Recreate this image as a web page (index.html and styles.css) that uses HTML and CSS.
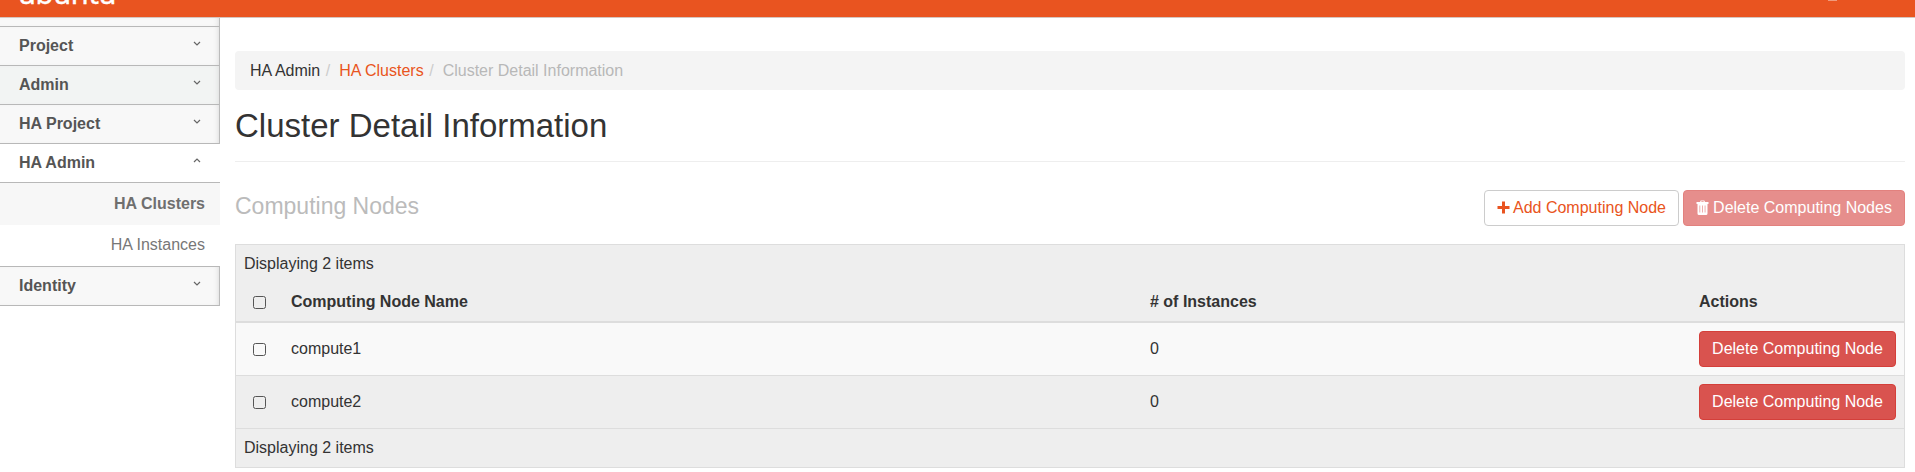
FILE: index.html
```html
<!DOCTYPE html>
<html lang="en">
<head>
<meta charset="utf-8">
<title>Cluster Detail Information</title>
<link rel="stylesheet" href="styles.css">
</head>
<body>
<header class="topbar"><span class="brand">ubuntu</span><span class="user-caret"></span></header>
<div class="layout">
  <nav class="sidebar">
    <div class="nav-stub"></div>
    <a class="nav-item">Project<svg class="chevron" viewBox="0 0 8 5"><path d="M1 1l3 3 3-3"/></svg></a>
    <a class="nav-item hover">Admin<svg class="chevron" viewBox="0 0 8 5"><path d="M1 1l3 3 3-3"/></svg></a>
    <a class="nav-item">HA Project<svg class="chevron" viewBox="0 0 8 5"><path d="M1 1l3 3 3-3"/></svg></a>
    <a class="nav-item open">HA Admin<svg class="chevron" viewBox="0 0 8 5"><path d="M1 4l3-3 3 3"/></svg></a>
    <a class="sub-item active">HA Clusters</a>
    <a class="sub-item last">HA Instances</a>
    <a class="nav-item">Identity<svg class="chevron" viewBox="0 0 8 5"><path d="M1 1l3 3 3-3"/></svg></a>
  </nav>
  <main class="content">
    <div class="breadcrumb"><span>HA Admin</span><i>/</i><a>HA Clusters</a><i>/</i><span class="current">Cluster Detail Information</span></div>
    <h1 class="title">Cluster Detail Information</h1>
    <div class="table-bar">
      <h2 class="subtitle">Computing Nodes</h2>
      <div class="actions">
        <button class="btn btn-default"><svg class="icon-plus" viewBox="0 0 13 13"><path d="M5 .5h3V5h4.500v3H8v4.500H5V8H.5V5H5z"/></svg><span>Add Computing Node</span></button>
        <button class="btn btn-danger disabled"><svg class="icon-trash" viewBox="0 0 13 15"><path fill-rule="evenodd" d="M4 2l.7-1.500h3.600L9 2h3.500v2h-1v9.500q0 1.500-1.500 1.500H3q-1.500 0-1.500-1.500V4h-1V2zM5.200 2h2.600l-.3-.7h-2zM3.500 5.500v7h.7v-7zm2.600 0v7h.7v-7zm2.600 0v7h.7v-7z"/></svg><span>Delete Computing Nodes</span></button>
      </div>
    </div>
    <div class="table">
      <div class="caption">Displaying 2 items</div>
      <div class="row head"><span class="check"></span><span>Computing Node Name</span><span># of Instances</span><span>Actions</span></div>
      <div class="row odd"><span class="check"></span><span class="cell">compute1</span><span class="cell">0</span><button class="btn btn-danger">Delete Computing Node</button></div>
      <div class="row"><span class="check"></span><span class="cell">compute2</span><span class="cell">0</span><button class="btn btn-danger">Delete Computing Node</button></div>
      <div class="caption foot">Displaying 2 items</div>
    </div>
  </main>
</div>
</body>
</html>
```
FILE: styles.css
```css
* { box-sizing: border-box; }
body { margin: 0; background: #fff; color: #333; font: 16px/23px Arial, "Liberation Sans", sans-serif; }
.topbar { height: 18px; display: flex; justify-content: space-between; align-items: flex-end; overflow: hidden; background: #e95420; border-bottom: 1px solid #d5c5bf; }
.brand { padding: 0 0 12px 18px; color: #fff; font: 400 29px/24px "Noto Sans", sans-serif; letter-spacing: -.3px; -webkit-text-stroke: .4px #fff; }
.user-caret { align-self: flex-start; width: 9px; height: 1px; margin-right: 78px; background: #f09a7c; }
.layout { display: flex; align-items: flex-start; }
.sidebar { width: 220px; flex: none; color: #555; }
.nav-stub, .nav-item { background: #f8f8f8; border-bottom: 1px solid #b8b8b8; border-right: 1px solid #bbb; box-shadow: inset -4px 0 5px -3px #ddd; }
.nav-stub { height: 9px; }
.nav-item { display: flex; align-items: center; justify-content: space-between; height: 39px; padding: 0 18px 1px 19px; font-weight: 700; }
.nav-item.hover { background: #f2f4f3; }
.nav-item.open { background: #fff; border-right: 0; padding-right: 19px; box-shadow: none; }
.chevron { width: 8px; height: 5px; margin-bottom: 4px; fill: none; stroke: #666; stroke-width: 1.2; }
.sub-item { display: flex; align-items: center; justify-content: flex-end; height: 42px; padding-right: 15px; color: #777; }
.sub-item.active { background: #f7f7f7; color: #6f6f6f; font-weight: 700; padding-bottom: 2px; }
.sub-item.last { border-bottom: 1px solid #b8b8b8; padding-bottom: 3px; }
.content { flex: 1; padding: 33px 10px 0 15px; }
.breadcrumb { display: flex; height: 39px; padding: 8px 15px; background: #f4f4f4; border-radius: 4px; }
.breadcrumb a { color: #e95420; }
.breadcrumb i { font-style: normal; color: #ccc; padding: 0 9px 0 5.500px; }
.breadcrumb .current { color: #b8b8b8; }
.title { height: 72px; margin: 0; padding-top: 16px; border-bottom: 1px solid #eee; font-size: 33px; line-height: 40px; font-weight: 400; }
.table-bar { display: flex; justify-content: space-between; height: 82px; padding-top: 28px; }
.subtitle { margin: 0; color: #bbb; font-size: 23px; line-height: 32px; font-weight: 400; }
.actions { display: flex; gap: 4px; }
.btn { height: 36px; padding: 0 12px 2px; border: 1px solid #ccc; border-radius: 4px; font: inherit; display: inline-flex; align-items: center; justify-content: center; white-space: nowrap; }
.btn-default { width: 195px; color: #e95420; background: #fff; }
.btn-danger { width: 197px; color: #fff; background: #d9534f; border-color: #d43f3a; }
.btn-danger.disabled { width: 222px; opacity: .65; }
.icon-plus { width: 13px; height: 13px; margin-right: 3px; fill: currentColor; }
.icon-trash { width: 13px; height: 15px; margin-right: 4px; fill: currentColor; }
.table { background: #eee; border: 1px solid #ddd; }
.caption { height: 38px; padding: 7px 8px; }
.row { display: grid; grid-template-columns: 55px 859px 549px 197px; height: 53px; align-items: center; border-bottom: 1px solid #ddd; }
.row.head { height: 40px; border-bottom-width: 2px; font-weight: 700; }
.row.odd { background: #f9f9f9; }
.head span:not(.check) { padding-bottom: 1px; }
.cell { padding-bottom: 2px; }
.check { width: 13px; height: 13px; margin: 0 0 0 17px; border: 1px solid #555; border-radius: 2.500px; }
```
